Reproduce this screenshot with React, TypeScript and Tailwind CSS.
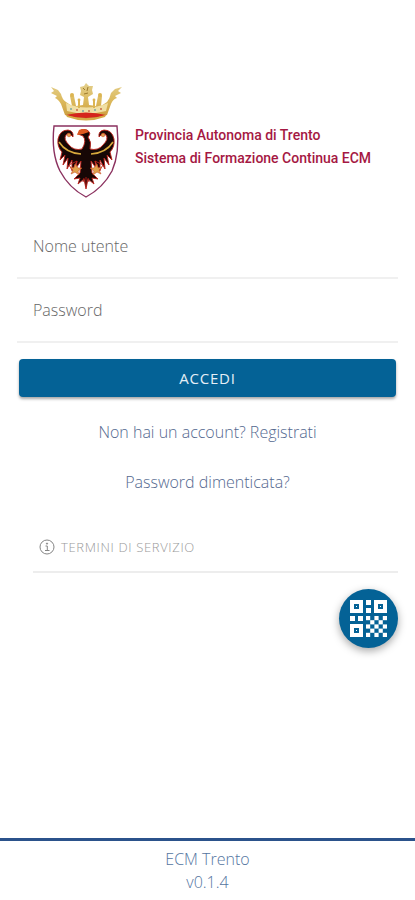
import { useState } from "react";

function Crest() {
  return (
    <svg viewBox="0 0 74 120" className="h-[120px] w-[74px] shrink-0" role="img" aria-label="Stemma">
      <defs>
        <linearGradient id="gold" x1="0" y1="0" x2="0" y2="1">
          <stop offset="0" stopColor="#e3cf8c" />
          <stop offset="0.5" stopColor="#dcb95c" />
          <stop offset="1" stopColor="#c99a3a" />
        </linearGradient>
      </defs>
      {/* crown */}
      <path
        d="M16 34 L12 23 Q9 18 6 17 L8 15 L2 12 L5 10 L2 6 L9 9 L12 13 Q13 18 17 21 L23 25 L21 15 L23 13 L25 15 L27 25 L34 24 L35 16 L31 14 L32 10 L31 6 L35 5 L37 2 L40 5 L44 5 L43 9 L44 13 L39 16 L40 24 L47 25 L49 15 L51 13 L53 15 L52 25 L58 21 Q61 17 62 12 L66 8 L73 6 L69 10 L72 12 L66 15 L68 17 Q64 18 62 23 L58 34 Q37 42 16 34Z"
        fill="url(#gold)"
      />
      <path d="M17 22 Q37 31 59 22 L57 30 Q37 35 18 30Z" fill="#f0dfa4" />
      <g fill="#dcb552">
        <circle cx="23" cy="14" r="2" />
        <circle cx="51" cy="14" r="2" />
        <circle cx="30" cy="19" r="1.4" />
        <circle cx="45" cy="19" r="1.4" />
        <path d="M29 20 H31 V27 H29Z M44 20 H46 V27 H44Z" />
      </g>
      <path d="M34 7 L36 9 M39 6 L38 10 M35 13 L39 12" stroke="#9d7a2c" strokeWidth="1" />
      <path d="M17 34 Q37 29 57 34 Q37 40 17 34Z" fill="#d5241c" />
      <path d="M17 34 Q37 41 57 34 L56 36 Q37 43 18 36Z" fill="#d6a945" />
      <g fill="#7ba6a2">
        <circle cx="22" cy="28" r="1" />
        <circle cx="34" cy="30" r="1" />
        <circle cx="46" cy="29" r="1" />
      </g>
      <g fill="#c96a48">
        <circle cx="28" cy="29" r="1" />
        <circle cx="40" cy="30" r="1" />
        <circle cx="52" cy="28" r="1" />
      </g>
      {/* shield */}
      <path d="M5 45 H68 Q71 72 63 90 Q54 107 37 116 Q20 107 11 90 Q2 72 5 45Z" fill="#fff" stroke="#8b315f" strokeWidth="1.4" />
      {/* eagle */}
      <g fill="#170706" stroke="#bd2018" strokeWidth="0.9" strokeLinejoin="round">
        <path d="M33 68 Q25 70 20 64 Q14 58 17 54 Q19 51 22 54 L24 56 Q25 50 19 49 Q11 49 9 58 Q8 66 13 71 L11 79 L16 74 L14 84 L19 77 L18 88 L23 79 L23 90 L28 80 L27 87 L32 80 L31 92 L25 98 L31 97 L29 103 L35 98 L37 108 L39 98 L45 103 L43 97 L49 98 L43 92 L42 80 L47 87 L46 80 L51 90 L51 79 L56 88 L55 77 L60 84 L58 74 L63 79 L61 71 Q66 66 65 58 Q63 49 55 49 Q49 50 50 56 L52 54 Q55 51 57 54 Q60 58 54 64 Q49 70 41 68 Q43 61 39 56 Q43 52 38 49 Q31 47 29 53 L34 55 Q38 60 33 68Z" />
        <path d="M28 80 L20 84 L23 89 M46 80 L54 84 L51 89" fill="none" />
      </g>
      <path d="M10 61 Q17 72 32 73 M64 61 Q57 72 42 73" fill="none" stroke="#d8aa3d" strokeWidth="1.6" />
      <path d="M28 54 L30 49 Q36 46 40 51 L34 53Z" fill="#dd5a22" />
      <g fill="#e0a24c" stroke="#c7502a" strokeWidth="0.6">
        <circle cx="20" cy="54" r="1.8" />
        <circle cx="54" cy="54" r="1.8" />
        <path d="M26 83 L29 87 L33 87 L29 90 L30 94 L26 91 L22 93 L24 89 L21 86 L25 87Z" />
        <path d="M48 83 L45 87 L41 87 L45 90 L44 94 L48 91 L52 93 L50 89 L53 86 L49 87Z" />
      </g>
      <path d="M37 96 V106 M34 101 L35 97 M40 101 L39 97" stroke="#a31b14" strokeWidth="1" fill="none" />
    </svg>
  );
}

function QrIcon() {
  const finders = [[0, 0], [24, 0], [0, 24]];
  const modules = [[16, 0], [16, 8], [0, 16], [8, 16]];
  const checks: number[][] = [];
  for (let y = 0; y < 5; y++) {
    for (let x = 0; x < 5; x++) {
      if ((x + y) % 2 === 0) checks.push([x, y]);
    }
  }
  return (
    <svg viewBox="0 0 37 37" className="size-[37px]" fill="#fff" aria-hidden="true">
      {finders.map(([x, y]) => (
        <g key={`${x}-${y}`}>
          <path fillRule="evenodd" d={`M${x} ${y}h13v13h-13z M${x + 4} ${y + 4}v5h5v-5z`} />
          <rect x={x + 6} y={y + 6} width="1" height="1" />
        </g>
      ))}
      {modules.map(([x, y]) => (
        <rect key={`${x}-${y}`} x={x} y={y} width="5" height="5" />
      ))}
      {checks.map(([x, y]) => (
        <rect key={`${x}-${y}`} x={16 + x * 4.2} y={16 + y * 4.2} width="4.2" height="4.2" />
      ))}
    </svg>
  );
}

function Field({ id, label, type }: { id: string; label: string; type: string }) {
  const [value, setValue] = useState("");
  return (
    <div className="grid h-16 items-center border-b-2 border-[#f0f0f0] pl-4">
      <label htmlFor={id} className={value ? "sr-only" : "col-start-1 row-start-1 text-[#666]"}>
        {label}
      </label>
      <input
        id={id}
        type={type}
        value={value}
        onChange={(e) => setValue(e.target.value)}
        className="col-start-1 row-start-1 w-full bg-transparent text-[#444] outline-none"
      />
    </div>
  );
}

export default function App() {
  return (
    <div className="flex min-h-screen flex-col bg-white font-['Open_Sans','Noto_Sans',sans-serif] text-base leading-6 font-light">
      <main className="flex flex-1 flex-col px-[17px] pt-[81px]">
        <header className="flex items-center gap-3 pl-8">
          <Crest />
          <h1 className="pt-3 font-[Roboto,sans-serif] text-sm leading-[23px] font-medium whitespace-nowrap text-[#a51843]">
            Provincia Autonoma di Trento
            <br />
            Sistema di Formazione Continua ECM
          </h1>
        </header>
        <form className="flex flex-col pt-3.5" onSubmit={(e) => e.preventDefault()}>
          <Field id="username" label="Nome utente" type="text" />
          <Field id="password" label="Password" type="password" />
          <button
            type="submit"
            className="mx-0.5 mt-4 h-[38px] rounded bg-[#046296] text-[15px] font-normal tracking-wider text-[#e4eff7] uppercase shadow-[0_2px_3px_rgba(0,0,0,0.35)]"
          >
            Accedi
          </button>
        </form>
        <nav className="flex flex-col items-center gap-[26px] pt-[23px] text-[#54698f]">
          <a href="#registrati">Non hai un account? Registrati</a>
          <a href="#password">Password dimenticata?</a>
        </nav>
        <a
          href="#termini"
          className="mt-7 ml-4 flex h-[51px] items-center gap-1.5 border-b-2 border-[#ededed] pl-1.5 text-[13px] tracking-wider text-[#9a9a9a] uppercase"
        >
          <svg viewBox="0 0 16 16" className="size-4" fill="none" stroke="#858585" strokeWidth="1" aria-hidden="true">
            <circle cx="8" cy="8" r="7" />
            <path d="M6.5 7 H8.3 V11.5 M6 11.5 H10.5" />
            <circle cx="8" cy="4.6" r="0.6" fill="#858585" />
          </svg>
          Termini di servizio
        </a>
        <button
          type="button"
          aria-label="QR code"
          className="mt-4 flex size-[59px] items-center justify-center self-end rounded-full bg-[#046296] shadow-[0_3px_8px_rgba(0,0,0,0.35)]"
        >
          <QrIcon />
        </button>
      </main>
      <footer className="border-t-[3px] border-[#2b528b] pt-[7px] pb-1.5 text-center leading-[23px] text-[#54759f]">
        <p>ECM Trento</p>
        <p>v0.1.4</p>
      </footer>
    </div>
  );
}
